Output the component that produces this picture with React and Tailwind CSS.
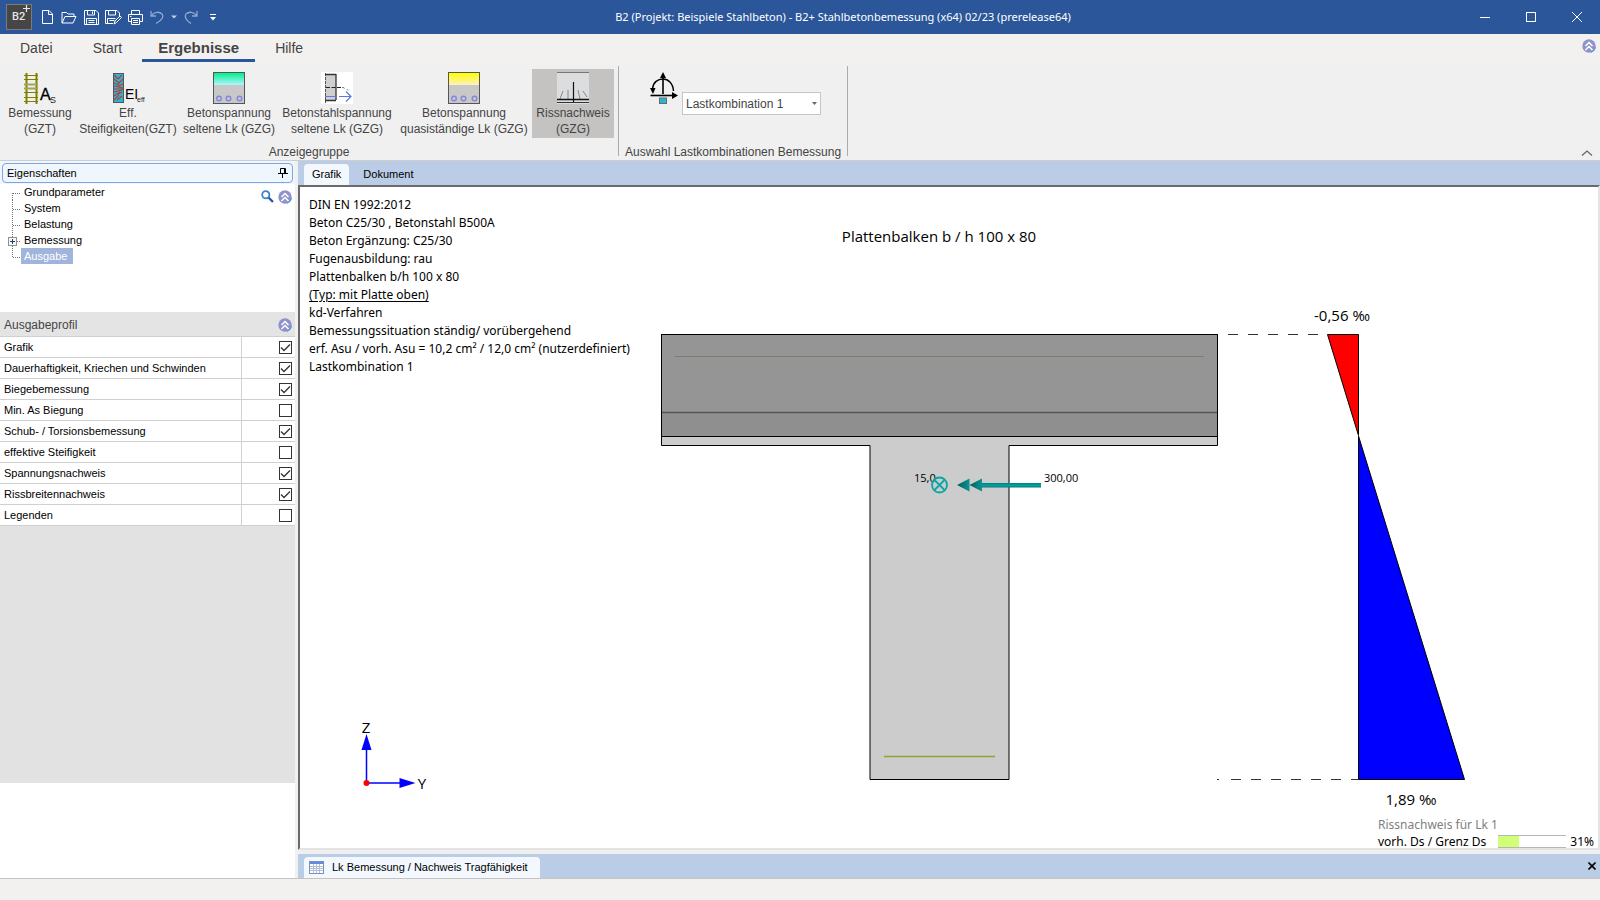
import { useState } from "react"

const menuTabs = ["Datei", "Start", "Ergebnisse", "Hilfe"]

const treeItems = ["Grundparameter", "System", "Belastung", "Bemessung", "Ausgabe"]

const profileOptions = [
  { id: "grafik", label: "Grafik", checked: true },
  { id: "dauerhaftigkeit", label: "Dauerhaftigkeit, Kriechen und Schwinden", checked: true },
  { id: "biegebemessung", label: "Biegebemessung", checked: true },
  { id: "min-as", label: "Min. As Biegung", checked: false },
  { id: "schub", label: "Schub- / Torsionsbemessung", checked: true },
  { id: "steifigkeit", label: "effektive Steifigkeit", checked: false },
  { id: "spannung", label: "Spannungsnachweis", checked: true },
  { id: "rissbreiten", label: "Rissbreitennachweis", checked: true },
  { id: "legenden", label: "Legenden", checked: false },
]

const infoLines = [
  "DIN EN 1992:2012",
  "Beton C25/30 , Betonstahl B500A",
  "Beton Ergänzung: C25/30",
  "Fugenausbildung: rau",
  "Plattenbalken b/h 100 x 80",
  "(Typ: mit Platte oben)",
  "kd-Verfahren",
  "Bemessungssituation ständig/ vorübergehend",
  "erf. Asu / vorh. Asu = 10,2 cm² / 12,0 cm² (nutzerdefiniert)",
  "Lastkombination 1",
]

/* Ribbon icons */

function RebarIcon() {
  return (
    <svg width="34" height="32" viewBox="0 0 34 32">
      <g stroke="#808000" fill="none">
        <path d="M3.5 1v31M13.5 1v31" strokeWidth="2" />
        <path d="M1 3.5h14M1 7.5h14M1 20.5h14M1 25.5h14M1 29.5h14" />
        <path d="M1 12.5h14M1 16.5h14" strokeWidth="2" stroke="#a3a352" />
      </g>
      <text x="17" y="28" fontSize="16" fontFamily="Liberation Sans, sans-serif" fill="#000" stroke="#000" strokeWidth="0.3">A</text>
      <text x="27" y="31" fontSize="9" fontFamily="Liberation Sans, sans-serif" fill="#222">S</text>
    </svg>
  )
}

function StiffnessIcon() {
  return (
    <svg width="34" height="32" viewBox="0 0 34 32">
      <rect x="2.5" y="1.5" width="10" height="29" fill="#26b6d9" stroke="#555" />
      <path
        d="M3 3l4 4M3 7l5 4M3 11l6 3M3 14l9 2M3 17h9M3 20l8-2M3 24l6-4M3 28l5-5M11 3l-4 4M12 7l-5 5M12 12l-4 2M11 20l-4 2M11 24l-5 4"
        stroke="#c0392b"
        strokeWidth="1.2"
      />
      <text x="14" y="27" fontSize="14" fontFamily="Liberation Sans, sans-serif" fill="#000">EI</text>
      <text x="26" y="30" fontSize="7" fontFamily="Liberation Sans, sans-serif" fill="#222">eff</text>
    </svg>
  )
}

function StressIcon({ id, from, to }) {
  return (
    <svg width="32" height="32" viewBox="0 0 32 32">
      <defs>
        <linearGradient id={id} x1="0" y1="0" x2="0" y2="1">
          <stop offset="0" stopColor={from} />
          <stop offset="1" stopColor={to} />
        </linearGradient>
      </defs>
      <rect width="32" height="32" fill="#c8c8c8" />
      <rect x="1" y="1" width="30" height="12" fill={`url(#${id})`} />
      <rect x="0.5" y="0.5" width="31" height="31" fill="none" stroke="#555" />
      <g fill="none" stroke="#8088e0" strokeWidth="1.4">
        <circle cx="6" cy="26.5" r="2.3" />
        <circle cx="15.5" cy="26.5" r="2.3" />
        <circle cx="26.5" cy="26.5" r="2.3" />
      </g>
    </svg>
  )
}

function SteelStressIcon() {
  return (
    <svg width="32" height="32" viewBox="0 0 32 32">
      <rect width="32" height="32" fill="#fff" />
      <rect x="4" y="3" width="11" height="25" fill="#d0d0d0" />
      <path d="M4.5 1v30" stroke="#555" strokeDasharray="3 1" />
      <path d="M4 2.5h11M15 2v26M4 28.5h11" stroke="#333" strokeWidth="1.3" />
      <path d="M5 15.5h18" stroke="#222" strokeDasharray="4 1.5" />
      <path d="M22 15.5l6 3" stroke="#999" strokeDasharray="2 2" />
      <path d="M4 24.5h11M18 24.5h12M25 19.5l5 5-5 5" stroke="#5b76f5" strokeWidth="1.2" fill="none" />
    </svg>
  )
}

function CrackIcon() {
  return (
    <svg width="32" height="32" viewBox="0 0 32 32">
      <rect width="32" height="32" fill="#dcdddf" />
      <path d="M0 0.5h32" stroke="#777" />
      <path d="M16.5 10v21" stroke="#111" strokeWidth="1.2" />
      <path d="M11 18v9M6 19l-3 8M21 18l2 9M26 19l4 6" stroke="#888" fill="none" />
      <path d="M0 27.5h32" stroke="#111" strokeWidth="1.5" />
      <path d="M0 30.5h32" stroke="#333" />
    </svg>
  )
}

function LoadIcon() {
  return (
    <svg width="28" height="32" viewBox="0 0 28 32">
      <rect x="9.5" y="26" width="7" height="5.5" fill="#26b6d9" stroke="#6b6b6b" />
      <path d="M0.5 23.5h23" stroke="#000" strokeWidth="1.6" />
      <path d="M22 20l6 3.5-6 3.5z" fill="#000" />
      <path d="M13 6v16" stroke="#000" strokeWidth="1.6" />
      <path d="M13 0l3 6h-6z" fill="#000" />
      <path d="M2.5 17C3 10 8 7 13 7s10 4 10.5 12" fill="none" stroke="#000" strokeWidth="1.4" />
      <path d="M0 16l5.5 0-2.5 6z" fill="#000" />
    </svg>
  )
}

const ribbonButtons = [
  { id: "gzt", lines: ["Bemessung", "(GZT)"], icon: <RebarIcon />, width: "w-18" },
  { id: "eff", lines: ["Eff.", "Steifigkeiten(GZT)"], icon: <StiffnessIcon />, width: "w-26" },
  {
    id: "beton-selten",
    lines: ["Betonspannung", "seltene Lk (GZG)"],
    icon: <StressIcon id="stress-rare" from="#00f08c" to="#b4f4ff" />,
    width: "w-[98px]",
  },
  { id: "stahl-selten", lines: ["Betonstahlspannung", "seltene Lk (GZG)"], icon: <SteelStressIcon />, width: "w-[118px]" },
  {
    id: "beton-quasi",
    lines: ["Betonspannung", "quasiständige Lk (GZG)"],
    icon: <StressIcon id="stress-quasi" from="#ffff00" to="#ffeec0" />,
    width: "w-34",
  },
  { id: "riss", lines: ["Rissnachweis", "(GZG)"], icon: <CrackIcon />, width: "w-[82px]" },
]

function CollapseIcon() {
  return (
    <svg width="14" height="14" viewBox="0 0 14 14">
      <circle cx="7" cy="7" r="6.7" fill="#8f93cd" />
      <path d="M9 13.4A6.7 6.7 0 0 0 13.6 8" stroke="#5b8fd0" fill="none" />
      <path d="M3.5 7L7 3.5 10.5 7M3.5 11L7 7.5l3.5 3.5" stroke="#fff" strokeWidth="1.5" fill="none" />
    </svg>
  )
}

function QuickAccess() {
  const button = "flex h-6 w-[22px] items-center justify-center"
  return (
    <div className="flex items-center">
      <button aria-label="Neu" className={button}>
        <svg width="11" height="14" viewBox="0 0 11 14" fill="none" stroke="#fff">
          <path d="M0.5 0.5h6.5l3.5 3.5v9.5H0.5zM6.5 0.5v4h4" />
        </svg>
      </button>
      <button aria-label="Öffnen" className={button}>
        <svg width="16" height="13" viewBox="0 0 16 13" fill="none" stroke="#fff">
          <path d="M1 12V1.5h4.5l1.5 1.5h6V5M1 12l3-6.5h11L12 12z" />
        </svg>
      </button>
      <button aria-label="Speichern" className={button}>
        <svg width="15" height="15" viewBox="0 0 15 15" fill="none" stroke="#fff">
          <path d="M0.5 0.5h11.5l2.5 2.5v11.5H0.5zM3.5 1v4h7V1M8.5 1.5v2.5M2.5 14.5v-6h10v6M4.5 10.5h6M4.5 12.5h6" />
        </svg>
      </button>
      <button aria-label="Speichern unter" className={button}>
        <svg width="17" height="15" viewBox="0 0 17 15" fill="none" stroke="#fff">
          <path d="M8 13.5H0.5v-13h11.5l2.5 2.5v3M3.5 1v4h7V1M2.5 13.5v-5h8M4.5 10.5h5M9 14l1-3 5-5 1.5 1.5-5 5z" />
        </svg>
      </button>
      <button aria-label="Drucken" className={button}>
        <svg width="15" height="15" viewBox="0 0 15 15" fill="none" stroke="#fff">
          <path d="M3.5 11.5h-3v-7h14v7h-3M3.5 4V0.5h8V4M3.5 8.5h8v6h-8zM2 6.5h1.5M5 10.5h5M5 12.5h5" />
        </svg>
      </button>
      <button aria-label="Rückgängig" className={button}>
        <svg width="14" height="14" viewBox="0 0 14 14" fill="none" stroke="#8fa6cf" strokeWidth="1.3">
          <path d="M1 1v5h5M1 6C4 2 9 1 12 4c2 3 0 6-6 9.5" />
        </svg>
      </button>
      <button aria-label="Rückgängig-Liste" className="flex h-6 w-3 items-center justify-center">
        <svg width="6" height="4" viewBox="0 0 6 4">
          <path d="M0 0.5h6L3 3.5z" fill="#c3cee3" />
        </svg>
      </button>
      <button aria-label="Wiederholen" className={button}>
        <svg width="14" height="14" viewBox="0 0 14 14" fill="none" stroke="#8fa6cf" strokeWidth="1.3">
          <path d="M13 1v5H8M13 6C10 2 5 1 2 4c-2 3 0 6 5 9.5" />
        </svg>
      </button>
      <button aria-label="Symbolleiste anpassen" className={button}>
        <svg width="6" height="7" viewBox="0 0 6 7">
          <path d="M0 0.5h6" stroke="#fff" />
          <path d="M0 3h6L3 6.5z" fill="#fff" />
        </svg>
      </button>
    </div>
  )
}

function TitleBar() {
  const windowButton = "flex h-8 w-[46px] items-center justify-center"
  return (
    <header className="flex h-[34px] shrink-0 items-center bg-[#2b579a]">
      <div className="flex items-center gap-1 pl-1.5">
        <svg width="26" height="26" viewBox="0 0 26 26">
          <rect x="0.5" y="0.5" width="25" height="25" fill="#464646" stroke="#7a7a7a" />
          <text x="6" y="16" fontSize="11" fontWeight="500" fontFamily="Roboto, sans-serif" fill="#e5e5e5">B2</text>
          <path d="M20.5 1v7M17 4.5h7" stroke="#e5e5e5" strokeWidth="1.2" />
        </svg>
        <QuickAccess />
      </div>
      <h1 className="flex-1 text-center font-['Noto_Sans',sans-serif] text-[11px] text-white">
        B2 (Projekt: Beispiele Stahlbeton) - B2+ Stahlbetonbemessung (x64) 02/23 (prerelease64)
      </h1>
      <div className="flex justify-end">
        <button aria-label="Minimieren" className={windowButton}>
          <svg width="10" height="10" viewBox="0 0 10 10"><path d="M0 5.5h10" stroke="#fff" /></svg>
        </button>
        <button aria-label="Maximieren" className={windowButton}>
          <svg width="10" height="10" viewBox="0 0 10 10"><rect x="0.5" y="0.5" width="9" height="9" fill="none" stroke="#fff" /></svg>
        </button>
        <button aria-label="Schließen" className={windowButton}>
          <svg width="10" height="10" viewBox="0 0 10 10"><path d="M0 0l10 10M10 0L0 10" stroke="#fff" /></svg>
        </button>
      </div>
    </header>
  )
}

function Ribbon() {
  const [active, setActive] = useState("riss")

  return (
    <section className="shrink-0 border-b border-[#cdcdcd] bg-[#f0f0f0] text-[12px] text-[#444]">
      {/* Menu tabs */}
      <nav className="flex h-7 items-center gap-1 bg-[#f3f1ef] pl-1 text-sm">
        {menuTabs.map((tab) => (
          <button
            key={tab}
            className={`h-7 border-b-3 pt-0.5 pl-4 ${tab === "Datei" ? "pr-5" : "pr-4"} ${
              tab === "Ergebnisse" ? "border-[#2b579a] text-[15px] font-bold" : "border-transparent"
            }`}
          >
            {tab}
          </button>
        ))}
        <button aria-label="Menüband ausblenden" className="mr-1 mb-1 ml-auto">
          <CollapseIcon />
        </button>
      </nav>

      <div className="flex h-[98px] pt-1">
        <div className="flex flex-col pl-1">
          <div className="flex pt-[3px]">
            {ribbonButtons.map((item) => (
              <button
                key={item.id}
                onClick={() => setActive(item.id)}
                className={`flex h-[69px] flex-col items-center pt-[3px] leading-4 whitespace-nowrap ${item.width} ${
                  active === item.id ? "bg-[#c5c3c1]" : ""
                }`}
              >
                {item.icon}
                <span className="mt-px">{item.lines[0]}</span>
                <span>{item.lines[1]}</span>
              </button>
            ))}
          </div>
          <p className="mt-auto text-center leading-4">Anzeigegruppe</p>
        </div>

        <div className="mb-1 ml-1 flex flex-col border-x border-[#ababab] px-1.5">
          <div className="flex items-start gap-1 pt-1.5 pl-[25px]">
            <LoadIcon />
            <div className="relative mt-5">
              <select
                id="combo"
                className="block h-[23px] w-[139px] appearance-none border border-[#c6c6c6] bg-white pl-[3px] text-[12px]"
              >
                <option>Lastkombination 1</option>
              </select>
              <svg className="pointer-events-none absolute top-[10px] right-1" width="5" height="3" viewBox="0 0 5 3">
                <path d="M0 0h5L2.5 3z" fill="#666" />
              </svg>
            </div>
          </div>
          <label htmlFor="combo" className="mt-auto -mb-1 text-center leading-4">
            Auswahl Lastkombinationen Bemessung
          </label>
        </div>

        <button aria-label="Menüband reduzieren" className="mt-auto mr-[7px] mb-1 ml-auto">
          <svg width="12" height="6" viewBox="0 0 12 6"><path d="M1 5.5l5-4.5 5 4.5" fill="none" stroke="#666" strokeWidth="1.3" /></svg>
        </button>
      </div>
    </section>
  )
}

function TreeItem({ label, last }) {
  const selected = label === "Ausgabe"
  return (
    <li className="flex h-4 items-center">
      <svg width="21" height="16" viewBox="0 0 21 16">
        <path
          d={label === "Grundparameter" ? "M12.5 9v7M13 9.5h8" : last ? "M12.5 0v9M13 9.5h8" : "M12.5 0v16M13 9.5h8"}
          stroke="#777"
          strokeDasharray="1 1"
          fill="none"
        />
        {label === "Bemessung" && (
          <g>
            <rect x="8.5" y="5.5" width="8" height="8" fill="#f6f6f6" stroke="#919191" />
            <path d="M10 9.5h5M12.5 7v5" stroke="#223c80" />
          </g>
        )}
      </svg>
      <button className={`h-4 leading-4 ${selected ? "bg-[#a0b4dc] pr-1.5 pl-[3px] text-white" : "pl-[3px]"}`}>
        {label}
      </button>
    </li>
  )
}

function Sidebar() {
  return (
    <aside className="flex w-[295px] shrink-0 flex-col bg-white text-[11px] text-black">
      <div className="bg-[#eff6fd] p-0.5 pb-px">
        <h2 className="flex h-5 items-center justify-between rounded-sm border border-[#7da7e0] px-1">
          Eigenschaften
          <button aria-label="Anheften">
            <svg width="10" height="10" viewBox="0 0 10 10" fill="none" stroke="#000">
              <path d="M2.5 0.5h5v5h-5zM6.5 0.5v5M0 5.5h10M4.5 6v4" />
            </svg>
          </button>
        </h2>
      </div>

      {/* Navigation tree */}
      <div className="flex h-32 justify-between">
        <ul>
          {treeItems.map((label, i) => (
            <TreeItem key={label} label={label} last={i === treeItems.length - 1} />
          ))}
        </ul>
        <div className="flex items-start gap-1 pt-1.5 pr-[3px]">
          <button aria-label="Suchen">
            <svg width="13" height="13" viewBox="0 0 13 13">
              <path d="M7.5 7.5L12 12" stroke="#2a58a8" strokeWidth="2.4" />
              <circle cx="4.8" cy="4.8" r="3.6" fill="#fff" stroke="#3b84c8" strokeWidth="1.8" />
            </svg>
          </button>
          <button aria-label="Baum einklappen">
            <CollapseIcon />
          </button>
        </div>
      </div>

      {/* Output profile */}
      <div className="flex h-6 items-center justify-between bg-[#e4e4e4] pt-px pr-[3px] pl-1">
        <h2 className="text-xs text-[#444]">Ausgabeprofil</h2>
        <button aria-label="Ausgabeprofil einklappen">
          <CollapseIcon />
        </button>
      </div>
      <table className="w-full border-collapse">
        <tbody>
          {profileOptions.map((option) => (
            <tr key={option.id} className="h-[21px] border-y border-[#d0d0d0]">
              <td className="p-0 pl-1">
                <label htmlFor={option.id}>{option.label}</label>
              </td>
              <td className="w-[54px] border-l border-[#d0d0d0] p-0 pr-[3px]">
                <span className="relative ml-auto block h-[13px] w-[13px]">
                  <input
                    id={option.id}
                    type="checkbox"
                    defaultChecked={option.checked}
                    className="peer block h-[13px] w-[13px] appearance-none border border-[#333] bg-white"
                  />
                  <svg
                    className="pointer-events-none invisible absolute inset-0 peer-checked:visible"
                    width="13"
                    height="13"
                    viewBox="0 0 13 13"
                  >
                    <path d="M2 6.5l3 3L11 3.5" fill="none" stroke="#333" strokeWidth="1.3" />
                  </svg>
                </span>
              </td>
            </tr>
          ))}
        </tbody>
      </table>
      <div className="h-[257px] bg-[#e2e2e2]"></div>
    </aside>
  )
}

// Cross section with reinforcement and the strain diagram beside it
function SectionDrawing() {
  return (
    <svg
      className="h-full w-full"
      viewBox="300 187 1298 661"
      preserveAspectRatio="xMinYMin meet"
      fontFamily="Open Sans, sans-serif"
    >
      <defs>
        <linearGradient id="arrow" x1="0" y1="0" x2="0" y2="1">
          <stop offset="0" stopColor="#067a7a" />
          <stop offset="0.5" stopColor="#00a6a6" />
          <stop offset="1" stopColor="#067a7a" />
        </linearGradient>
        <linearGradient id="head" x1="0" y1="0" x2="1" y2="0">
          <stop offset="0" stopColor="#0b5a5a" />
          <stop offset="1" stopColor="#0a9494" />
        </linearGradient>
      </defs>

      <text x="939" y="242" fontSize="15" textAnchor="middle">Plattenbalken b / h 100 x 80</text>

      <path d="M661.5 436V445.5H870V779.5H1009V445.5H1217.5V436z" fill="#cccccc" stroke="#000" />
      <rect x="661.5" y="334.5" width="556" height="102" fill="#959595" stroke="#000" />
      <rect x="662" y="412" width="555" height="24" fill="#8f8f8f" />
      <path d="M662 412.5h555" stroke="#555" strokeWidth="1.5" />
      <path d="M675 356.5h529" stroke="#7d7d6c" />
      <path d="M884 756.5h111" stroke="#93a032" strokeWidth="1.5" />

      {/* Forces */}
      <text x="914" y="482" fontSize="11">15,0</text>
      <g fill="none" stroke="#0aa5a5" strokeWidth="1.8">
        <circle cx="939.5" cy="485" r="7.5" />
        <path d="M934.5 480l10 10M944.5 480l-10 10" />
      </g>
      <rect x="981" y="483" width="60" height="4.5" fill="url(#arrow)" />
      <path d="M957 485l12.5-6.5v13z" fill="url(#head)" />
      <path d="M969.5 485l12.5-6.5v13z" fill="url(#head)" />
      <text x="1044" y="482" fontSize="11">300,00</text>

      {/* Strains */}
      <g stroke="#333" strokeDasharray="10 10">
        <path d="M1228 334.5h99" />
        <path d="M1217 779.5h2M1231 779.5h127" />
      </g>
      <path d="M1327.5 334.5h31v101z" fill="#ff0000" stroke="#000" />
      <path d="M1358.5 436v343.5h106z" fill="#0000ff" stroke="#000" />
      <text x="1342" y="321" fontSize="15" textAnchor="middle">-0,56 ‰</text>
      <text x="1411" y="805" fontSize="15" textAnchor="middle">1,89 ‰</text>

      {/* Axes */}
      <g stroke="#0000ff" strokeWidth="1.5">
        <path d="M366.5 783V748M366.5 783H400" />
      </g>
      <path d="M366.5 734l5 16h-10zM415.5 783l-16-5v10z" fill="#0000ff" />
      <circle cx="366.5" cy="783" r="3" fill="#ff0000" />
      <text x="366" y="733" fontSize="15" textAnchor="middle">Z</text>
      <text x="422" y="789" fontSize="15" textAnchor="middle">Y</text>
    </svg>
  )
}

function Workspace() {
  const usage = 31

  return (
    <main className="flex min-w-0 flex-1 flex-col">
      <div className="flex h-6 items-end bg-[#bbcde6] pl-1.5 text-[11px] text-black">
        <button className="h-[21px] rounded-t-sm bg-[#f2f8fe] px-2">Grafik</button>
        <button className="h-[21px] px-3.5">Dokument</button>
      </div>

      <div className="relative min-h-0 flex-1 overflow-hidden border-2 border-t-[#6a6a6a] border-r-[#e3e3e3] border-b-[#e3e3e3] border-l-[#6a6a6a] bg-white font-['Noto_Sans',sans-serif]">
        <SectionDrawing />

        <div className="absolute top-[9px] left-[9px] text-[12px] leading-[18px] text-black">
          {infoLines.map((line) => (
            <p key={line} className={line.startsWith("(Typ") ? "underline underline-offset-2" : ""}>
              {line}
            </p>
          ))}
        </div>

        <div className="absolute right-1 bottom-0 w-54 text-[12px] text-black">
          <p className="mb-0.5 leading-4 text-[#808080]">Rissnachweis für Lk 1</p>
          <div className="flex items-center gap-1 leading-[13px]">
            <span>vorh. Ds / Grenz Ds</span>
            <div className="ml-auto h-[13px] w-[68px] border-y border-[#b5b5b5]">
              <div className="h-full bg-[#d2ff78]" style={{ width: `${usage}%` }}></div>
            </div>
            <span>{usage}%</span>
          </div>
        </div>
      </div>

      <div className="mt-1 flex h-6 items-end justify-between bg-[#bbcde6] pl-1.5 text-[11px] text-black">
        <button className="flex h-[21px] items-center gap-2 rounded-t-sm bg-[#f2f8fe] pr-3 pl-[5px]">
          <svg width="15" height="13" viewBox="0 0 15 13">
            <rect x="0.5" y="0.5" width="14" height="12" fill="#fff" stroke="#7c8fb5" />
            <path d="M1 1h13v2H1z" fill="#5b8ee0" />
            <path d="M1 5.5h13M1 7.5h13M1 9.5h13M4.5 3v9M7.5 3v9M10.5 3v9" stroke="#b3bfd4" />
          </svg>
          Lk Bemessung / Nachweis Tragfähigkeit
        </button>
        <button aria-label="Tabelle schließen" className="mr-1 mb-2">
          <svg width="8" height="8" viewBox="0 0 8 8"><path d="M0.5 0.5l7 7M7.5 0.5l-7 7" stroke="#000" strokeWidth="1.6" /></svg>
        </button>
      </div>
    </main>
  )
}

export default function App() {
  return (
    <div className="flex h-screen flex-col bg-[#f0f0f0] font-['Liberation_Sans',Arial,sans-serif]">
      <TitleBar />
      <Ribbon />
      <div className="flex min-h-0 flex-1 gap-[3px]">
        <Sidebar />
        <Workspace />
      </div>
      <footer className="h-[22px] shrink-0 border-t border-[#c3c3c3] bg-[#f3f1ef]"></footer>
    </div>
  )
}
